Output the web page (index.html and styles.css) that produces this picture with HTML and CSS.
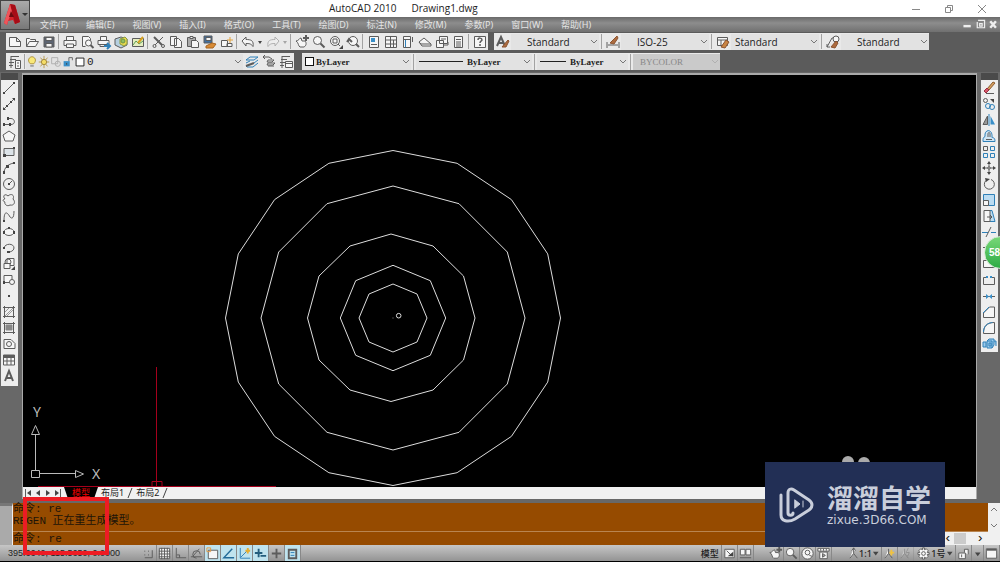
FILE: index.html
```html
<!DOCTYPE html>
<html lang="zh-CN">
<head>
<meta charset="utf-8">
<title>AutoCAD 2010 Drawing1.dwg</title>
<link rel="stylesheet" href="styles.css">
</head>
<body>
<div class="app">
  <header class="titlebar">
    <button class="app-button" aria-label="应用程序菜单">
      <svg width="28" height="28" viewBox="0 0 28 28"><path d="M3 22 9 3l5 1 5 17-5 2-2-4-5 1-1 4z" fill="#d5232b"/><path d="m9 3 5 1 5 17-5 2z" fill="#a60d17"/><path d="M3 22 9 3l2 8-4 9-1 4z" fill="#f0555a"/><path d="m8 16 2-6 3 6z" fill="#6b0b10"/><path d="M21 12h6l-3 3z" fill="#333"/></svg>
    </button>
    <h1 class="title"><span>AutoCAD 2010</span><span>Drawing1.dwg</span></h1>
    <div class="window-buttons">
      <button aria-label="最小化"><svg class="i" viewBox="0 0 16 16"><path d="M4 8.500h8"/></svg></button>
      <button aria-label="还原"><svg class="i" viewBox="0 0 16 16"><path d="M4.500 6.500h5v5h-5zM6.500 6V4.500h5v5H10"/></svg></button>
      <button aria-label="关闭"><svg class="i" viewBox="0 0 16 16"><path d="m4 4 8 8m0-8-8 8"/></svg></button>
    </div>
  </header>

  <nav class="menubar">
    <div class="menus">
      <button>文件(F)</button><button>编辑(E)</button><button>视图(V)</button><button>插入(I)</button><button>格式(O)</button><button>工具(T)</button><button>绘图(D)</button><button>标注(N)</button><button>修改(M)</button><button>参数(P)</button><button>窗口(W)</button><button>帮助(H)</button>
    </div>
    <div class="doc-buttons">
      <button aria-label="最小化文档"><svg class="i" viewBox="0 0 16 16"><path d="M3 10h9" stroke-width="3"/></svg></button>
      <button aria-label="还原文档"><svg class="i" viewBox="0 0 16 16"><path d="M5 3h8v9H4V5M7 7h3v3H7z" stroke-width="1.500"/></svg></button>
      <button aria-label="关闭文档"><svg class="i" viewBox="0 0 16 16"><path d="m4 4 7 8m0-8-7 8" stroke-width="3"/></svg></button>
    </div>
  </nav>

  <div class="toolrow">
    <div class="toolbar">
      <button aria-label="新建"><svg class="i" viewBox="0 0 16 16"><path class="w" d="M2.500 3.500h7l4 4v5h-11zM9.500 3.500v4h4"/></svg></button>
      <button aria-label="打开"><svg class="i" viewBox="0 0 16 16"><path class="w" d="M2.500 12.500v-8h3l1 1h5v2M2.500 12.500l3-5h9l-3 5z"/></svg></button>
      <button aria-label="保存"><svg class="i" viewBox="0 0 16 16"><path class="n" d="M3 3h10v10H3z"/><path class="w" d="M5 3.500h6v3H5zM5 9.500h6V13H5z"/></svg></button>
      <hr>
      <button aria-label="打印"><svg class="i" viewBox="0 0 16 16"><path class="w" d="M4.500 6V2.500h7V6M2 6.500h12v5H2z"/><path d="M4.500 10v3.500h7V10z" class="w"/></svg></button>
      <button aria-label="打印预览"><svg class="i" viewBox="0 0 16 16"><path class="w" d="M3.500 12.500v-10h6l2 2v2M3.500 12.500h3"/><circle class="w" cx="9.500" cy="9" r="3"/><path d="m11.500 11 3 3" stroke-width="2"/></svg></button>
      <button aria-label="发布"><svg class="i" viewBox="0 0 16 16"><path class="w" d="M4.500 6V2.500h6V6M2 6.500h11v4H2zM4 10.500v2h4"/><path class="b" d="M8 12h5m-2-3 3 3-3 3" stroke-width="2"/></svg></button>
      <button aria-label="三维 DWF"><svg class="i" viewBox="0 0 16 16"><path d="m2 5 6-2 6 2v6l-6 3-6-3z" fill="#b5cfe0"/><path d="m7 5 5-2 2 2v5l-3 2-4-2z" fill="#e7d84b" stroke="#8a9a40"/><circle cx="10" cy="7" r="2" fill="#8fbf60" stroke="#6c9448"/></svg></button>
      <button aria-label="图纸集"><svg class="i" viewBox="0 0 16 16"><path d="M2.500 4.500h11v8h-11z" fill="#e5edc0"/><path d="m3 11 3-4 3 3 4-3" stroke="#599d54"/><path d="m8 9 5-6" stroke="#d6a020" stroke-width="2"/></svg></button>
      <hr>
      <button aria-label="剪切"><svg class="i" viewBox="0 0 16 16"><path d="m3 3 8 8M12 3l-8 8"/><path d="m3 3 8 8" stroke-width="2"/><circle cx="3.500" cy="12" r="1.500"/><circle cx="12" cy="12" r="1.500"/></svg></button>
      <button aria-label="复制"><svg class="i" viewBox="0 0 16 16"><path class="w" d="M2.500 2.500h6v9h-6zM6.500 4.500h4l3 3v6h-7z"/></svg></button>
      <button aria-label="粘贴"><svg class="i" viewBox="0 0 16 16"><path d="M2.500 3.500h8v9h-8z" fill="#aaa"/><path class="w" d="M6.500 6.500h5l2 2v5h-7zM5 2.500h3v2H5z"/></svg></button>
      <button aria-label="特性匹配"><svg class="i" viewBox="0 0 16 16"><path d="M2 2h8v7H2z" fill="#3f6fa0"/><path class="w" d="M4 3.500h5v3H4z"/><path d="m4 12 6-3 4 1-3 4H4z" fill="#d88b35" stroke="#a86520"/></svg></button>
      <button aria-label="块编辑器"><svg class="i" viewBox="0 0 16 16"><path class="w" d="M2.500 6.500h6v6h-6zM8 9.500h5v3H8z"/><path d="M11 3v6M8 6h6" stroke="#e2a13b"/></svg></button>
      <hr>
      <button aria-label="放弃"><svg class="i" viewBox="0 0 16 16"><path class="w" d="m2 7 4-4v2.500c5 0 8 1 7 7-2-3-4-3-7-3V12z"/></svg></button>
      <button class="drop" aria-label="放弃列表"><svg class="i" viewBox="0 0 8 16"><path class="f" d="M2 7h4L4 10z"/></svg></button>
      <button class="dim" aria-label="重做"><svg class="i" viewBox="0 0 16 16"><path class="w" d="m14 7-4-4v2.500c-5 0-8 1-7 7 2-3 4-3 7-3V12z"/></svg></button>
      <button class="drop dim" aria-label="重做列表"><svg class="i" viewBox="0 0 8 16"><path class="f" d="M2 7h4L4 10z"/></svg></button>
      <hr>
      <button aria-label="实时平移"><svg class="i" viewBox="0 0 16 16"><path class="w" d="M2 7c3 0 3-3 5-3l1 3h3c2 2 1 5-1 6H6C4 12 5 9 2 7z"/><path d="M12 1v6M9 4h6" stroke-width="2"/></svg></button>
      <button aria-label="实时缩放"><svg class="i" viewBox="0 0 16 16"><circle class="w" cx="6.500" cy="6.500" r="4"/><path d="m9.500 9.500 4 4" stroke-width="2"/></svg></button>
      <button aria-label="窗口缩放"><svg class="i" viewBox="0 0 16 16"><circle class="w" cx="7" cy="7" r="4.500"/><path d="M5 5h4v4H5zM10 10l2 2"/><path class="f" d="M15 11v4h-4z"/></svg></button>
      <button aria-label="缩放上一个"><svg class="i" viewBox="0 0 16 16"><circle class="w" cx="8" cy="7" r="4.500"/><path d="M2 8l2-3 3 3m4 2 3 3" stroke-width="2"/></svg></button>
      <hr>
      <button aria-label="特性"><svg class="i" viewBox="0 0 16 16"><path class="w" d="M3.500 2.500h9v11h-9z"/><path class="bf" d="M5 4h4v4H5z"/><path d="M5 10.500h6"/></svg></button>
      <button aria-label="设计中心"><svg class="i" viewBox="0 0 16 16"><path class="w" d="M2.500 2.500h11v11h-11zM7.500 3v10M3 6h10M3 10h10M10.500 6v7"/></svg></button>
      <button aria-label="工具选项板"><svg class="i" viewBox="0 0 16 16"><path class="w" d="M3.500 2.500h7v11h-7zM4 5.500h6M12.500 3v5"/><path class="b" d="M5.500 6v7"/></svg></button>
      <button aria-label="图纸集管理器"><svg class="i" viewBox="0 0 16 16"><path class="w" d="m2 8 5-4 7 6H4zM2 8l3 4h9v-2"/></svg></button>
      <button aria-label="标记集管理器"><svg class="i" viewBox="0 0 16 16"><path class="w" d="M5.500 2.500h8v7h-8zM2.500 6.500h7v7h-7zM10 11h4v-3M7 5h5"/></svg></button>
      <button aria-label="快速计算器"><svg class="i" viewBox="0 0 16 16"><path class="w" d="M3.500 2.500h8v11h-8zM5 5.500h5M5 8h5M5 10h5M5 12h5"/></svg></button>
      <hr>
      <button aria-label="帮助"><svg class="i" viewBox="0 0 16 16"><path class="w" d="M2.500 2.500h11v11h-11z"/><path d="M6 6c0-3 4-2 4 0 0 1-2 1-2 3m0 1v2" stroke-width="1.500"/></svg></button>
    </div>
    <div class="toolbar styles">
      <button aria-label="文字样式"><svg class="i" viewBox="0 0 16 16"><path d="m2 12 4-9 4 9M4 9h4" stroke-width="2"/><path d="m7 13 6-7 1 1-3 6z" fill="#ad6c3f" stroke="#8b5330"/></svg></button>
      <label class="combo ind"><select aria-label="文字样式"><option>Standard</option></select><svg class="chev" viewBox="0 0 8 8"><path d="m1 2 3 3 3-3"/></svg></label>
      <hr>
      <button aria-label="标注样式"><svg class="i" viewBox="0 0 16 16"><path d="M2 8v6m12-6v6M3 11h10"/><path d="m5 9 7-7 1 2-4 6z" fill="#ad6c3f" stroke="#8b5330"/></svg></button>
      <label class="combo ind"><select aria-label="标注样式"><option>ISO-25</option></select><svg class="chev" viewBox="0 0 8 8"><path d="m1 2 3 3 3-3"/></svg></label>
      <hr>
      <button aria-label="表格样式"><svg class="i" viewBox="0 0 16 16"><path class="w" d="M2.500 3.500h10v8h-10zM2.500 6h10M6 6v5"/><path d="m6 13 5-7 3 2-4 6z" fill="#c98442" stroke="#8b5330"/></svg></button>
      <label class="combo"><select aria-label="表格样式"><option>Standard</option></select><svg class="chev" viewBox="0 0 8 8"><path d="m1 2 3 3 3-3"/></svg></label>
      <hr>
      <button aria-label="多重引线样式"><svg class="i" viewBox="0 0 16 16"><path class="w" d="m2 13 5-9h2M2 10v3h3"/><circle class="w" cx="11" cy="5" r="3"/><path d="m6 13 5-6 2 2-3 5z" fill="#ad6c3f" stroke="#8b5330"/></svg></button>
      <label class="combo ind"><select aria-label="多重引线样式"><option>Standard</option></select><svg class="chev" viewBox="0 0 8 8"><path d="m1 2 3 3 3-3"/></svg></label>
    </div>
  </div>

  <div class="toolrow second">
    <div class="toolbar layers">
      <button aria-label="图层特性"><svg class="i" viewBox="0 0 16 16"><path class="w" d="M4 2.500h8M3 5.500h6M2 8.500h5M2 11.500h4M4 2v12M8.500 6.500h5v8h-5zM10 9h2m-2 3h2"/></svg></button>
      <hr>
      <div class="layer-box">
        <svg class="i" viewBox="0 0 12 16"><path d="M4 10c-4-4-1-8 2-8s6 4 2 8z" fill="#f9e878" stroke="#a88c35"/><path d="M4 12.500h4"/></svg>
        <svg class="i" viewBox="0 0 12 16"><path d="M6 1v14M0 8h12M2 3l8 10m0-10L2 13" stroke="#b39443"/><circle cx="6" cy="8" r="3" fill="#f5dd67" stroke="#9b8138"/></svg>
        <svg class="i faint" viewBox="0 0 12 16"><path d="M1 3h7v7H1z"/><circle cx="8" cy="10" r="3"/></svg>
        <svg class="i" viewBox="0 0 12 16"><path class="bf" d="M1 7h7v6H1z"/><path d="M7 7V3h4v3"/><path class="f" d="M4 9h1v2H4z"/></svg>
        <svg class="i" viewBox="0 0 12 16"><path d="M1.500 3.500h9v9h-9z" fill="#fff" stroke="#111"/></svg>
        <label class="combo"><select aria-label="图层"><option>0</option></select><svg class="chev" viewBox="0 0 8 8"><path d="m1 2 3 3 3-3"/></svg></label>
      </div>
      <button aria-label="置为当前图层"><svg class="i" viewBox="0 0 16 16"><path class="b" d="m2 6 4-3h8l-4 3zM2 9l4-2m4 2 4-3M2 12l1 1h6l5-4"/><path d="m2 12 8-3" stroke-width="2"/></svg></button>
      <button aria-label="上一个图层"><svg class="i" viewBox="0 0 16 16"><path d="M2 3h6l3 2M7 6h6l-2 2H6zM7 9h7l-2 2H6zM7 12h6M2 3l2-2M2 3l2 2"/></svg></button>
      <button aria-label="图层状态"><svg class="i" viewBox="0 0 16 16"><path class="w" d="M4 2.500h8M3 5.500h6M2 8.500h5M2 11.500h4M4 2v12M7.500 7.500h7v6h-7zM7.500 9.500h7"/></svg></button>
    </div>
    <div class="toolbar props">
      <label class="combo color"><i class="swatch"></i><select aria-label="颜色"><option>ByLayer</option></select><svg class="chev" viewBox="0 0 8 8"><path d="m1 2 3 3 3-3"/></svg></label>
      <hr>
      <label class="combo ltype"><i class="rule long"></i><select aria-label="线型"><option>ByLayer</option></select><svg class="chev" viewBox="0 0 8 8"><path d="m1 2 3 3 3-3"/></svg></label>
      <hr>
      <label class="combo lweight"><i class="rule"></i><select aria-label="线宽"><option>ByLayer</option></select><svg class="chev" viewBox="0 0 8 8"><path d="m1 2 3 3 3-3"/></svg></label>
      <hr>
      <label class="combo plot"><select aria-label="打印样式" disabled><option>BYCOLOR</option></select><svg class="chev" viewBox="0 0 8 8"><path d="m1 2 3 3 3-3"/></svg></label>
    </div>
  </div>

  <main class="workspace">
    <aside class="palette draw">
      <button aria-label="直线"><svg class="i" viewBox="0 0 16 16"><path d="M3 13 13 3"/><path class="f" d="M2 12h2v2H2zM12 2h2v2h-2z"/></svg></button>
      <button aria-label="构造线"><svg class="i" viewBox="0 0 16 16"><path d="M3 13 13 3"/><path class="f" d="M2 11v3h3zM14 5V2h-3zM5 9h2v2H5zM9 5h2v2H9z"/></svg></button>
      <button aria-label="多段线"><svg class="i" viewBox="0 0 16 16"><path d="M3 12.500h7c5 0 4-6 0-6H7"/><path class="f" d="M2 11h2v3H2zM8 11h2v3H8zM6 5h2v3H6z"/></svg></button>
      <button aria-label="正多边形"><svg class="i" viewBox="0 0 16 16"><path class="w" d="m8 3 6 4-2 6H4L2 7z"/></svg></button>
      <button aria-label="矩形"><svg class="i" viewBox="0 0 16 16"><path d="M3 4.500h10v7H3z" fill="#dce3e8"/><path class="f" d="M2 10h3v3H2zM12 3h2v2h-2z"/></svg></button>
      <button aria-label="圆弧"><svg class="i" viewBox="0 0 16 16"><path d="M3 13c0-5 4-9 10-10"/><path class="f" d="M2 11h2v3H2zM5 5h3v3H5zM12 2h2v2h-2z"/></svg></button>
      <button aria-label="圆"><svg class="i" viewBox="0 0 16 16"><circle cx="8" cy="8" r="5.500"/><path d="m8 8 3-3"/><path class="f" d="M7 7h2v2H7z"/></svg></button>
      <button aria-label="修订云线"><svg class="i" viewBox="0 0 16 16"><path d="M4 7C1 4 4 1 7 4c3-3 7-1 5 3 3 3 1 7-3 6-3 2-6-1-5-3-3-1-2-3 0-3z"/></svg></button>
      <button aria-label="样条曲线"><svg class="i" viewBox="0 0 16 16"><path d="M3 13c0-14 5-6 6-4 3 3 4-1 4-6"/><path class="f" d="M2 12h2v2H2z"/></svg></button>
      <button aria-label="椭圆"><svg class="i" viewBox="0 0 16 16"><ellipse class="w" cx="8" cy="8" rx="5" ry="3.500"/><path class="f" d="M2 7h2v3H2zM12 7h2v3h-2zM7 3h2v2H7z"/></svg></button>
      <button aria-label="椭圆弧"><svg class="i" viewBox="0 0 16 16"><path d="M3 8c1-5 10-5 10 0 0 3-4 4-5 4"/><path class="f" d="M2 7h2v2H2zM6 11h3v2H6z"/></svg></button>
      <button aria-label="插入块"><svg class="i" viewBox="0 0 16 16"><path class="w" d="M6 2.500h7v7H6z"/><circle cx="7" cy="6" r="3"/><path class="w" d="M3 7.500h6v5H3z"/><path class="f" d="M14 10v4h-4z"/></svg></button>
      <button aria-label="创建块"><svg class="i" viewBox="0 0 16 16"><path class="w" d="M3 3.500h8v7H3z"/><circle class="w" cx="11" cy="10" r="2.500"/><path class="f" d="M2 9h2v3H2z"/></svg></button>
      <button aria-label="点"><svg class="i" viewBox="0 0 16 16"><path class="f" d="M7 7h2v2H7z"/></svg></button>
      <button aria-label="图案填充"><svg class="i" viewBox="0 0 16 16"><path d="M2 3.500h12M2 12.500h12M3.500 2v12M12.500 2v12"/><path d="m4 8 4-4m-4 8 8-8m-6 8 6-6" stroke="#999"/></svg></button>
      <button aria-label="渐变色"><svg class="i" viewBox="0 0 16 16"><path d="M2 3.500h12M2 12.500h12M3.500 2v12M12.500 2v12"/><path d="M5 5h6v5H5z" fill="#888" stroke="#888"/></svg></button>
      <button aria-label="面域"><svg class="i" viewBox="0 0 16 16"><path class="w" d="M3 3.500h7l4 4v5H3z"/><circle class="w" cx="8" cy="8" r="2.500"/></svg></button>
      <button aria-label="表格"><svg class="i" viewBox="0 0 16 16"><path class="w" d="M2.500 3h11v10h-11zM2.500 5.500h11M2.500 9h11M6 6v7M10 6v7"/><path d="M3 4h10" stroke-width="2"/></svg></button>
      <button aria-label="多行文字"><svg class="i" viewBox="0 0 16 16"><path d="m4 13 4-10 4 10M5 10h6" stroke-width="2"/></svg></button>
    </aside>

    <section class="document">
      <div class="canvas">
        <svg class="drawing" role="img" aria-label="同心圆图形">
          <g transform="translate(-23 -75)" fill="none" stroke="#ddd" stroke-width="1">
            <g transform="translate(393 318)">
              <path d="M167.500 0 154.700 64.100 118.400 118.400 64.100 154.700 0 167.500-64.100 154.700-118.400 118.400-154.700 64.100-167.500 0-154.700-64.100-118.400-118.400-64.100-154.700 0-167.500 64.100-154.700 118.400-118.400 154.700-64.100z"/>
              <path d="M132 0 114.300 66 66 114.300 0 132-66 114.300-114.300 66-132 0-114.300-66-66-114.300 0-132 66-114.300 114.300-66z"/>
              <path d="M82 0 70.500 42 40 72-2 83.500-43 72-74 42-85.500 0-74-42-43-72-2-84 40-72 70.500-42z"/>
              <path d="M52.700 0 37.300 37.300 0 52.700-37.300 37.300-52.700 0-37.300-37.300 0-52.700 37.300-37.300z"/>
              <path d="M34 0 24 24 0 34-24 24-34 0-24-24 0-34 24-24z"/>
              <circle cx="5.700" cy="-2.300" r="2.300"/><path d="M-.5 0h1" stroke="#888"/>
            </g>
            <g stroke="#bbb"><path d="M31.500 470.500h8v7h-8zM35.500 470v-36M31.500 434.500h8l-4-9zM40 473.500h35M75.500 470.500v7l8-3.500z"/></g>
            <g stroke="#a5001c"><path d="M156.500 367v119M38 486.500h238M152 481.500h10v6h-10z"/></g>
            <g fill="#bbb" stroke="none" class="axis"><text x="33" y="417">Y</text><text x="92" y="479">X</text></g>
            <g fill="#aaa" stroke="none"><circle cx="848" cy="462" r="6"/><circle cx="864" cy="463" r="6"/></g>
          </g>
        </svg>
      </div>
      <div class="tabs">
        <button class="nav" aria-label="第一个"><svg class="i" viewBox="0 0 10 12"><path d="M2.500 2v8"/><path class="f" d="M8 3v6L4 6z"/></svg></button>
        <button class="nav" aria-label="上一个"><svg class="i" viewBox="0 0 10 12"><path class="f" d="M7 3v6L3 6z"/></svg></button>
        <button class="nav" aria-label="下一个"><svg class="i" viewBox="0 0 10 12"><path class="f" d="M3 3v6l4-3z"/></svg></button>
        <button class="nav" aria-label="最后一个"><svg class="i" viewBox="0 0 10 12"><path d="M7.500 2v8"/><path class="f" d="M2 3v6l4-3z"/></svg></button>
        <button class="tab active">模型</button>
        <button class="tab">布局1</button><svg class="slash" viewBox="0 0 6 12"><path d="M1 11 5 1"/></svg>
        <button class="tab">布局2</button><svg class="slash" viewBox="0 0 6 12"><path d="M1 11 5 1"/></svg>
      </div>
    </section>

    <aside class="palette modify">
      <button aria-label="删除"><svg class="i" viewBox="0 0 16 16"><path d="m6 9 6-7 2 1-6 7z" fill="#d7a15f" stroke="#8a5a30"/><path d="m3 11 3-3 2 2-3 3z" fill="#d6576a" stroke="#9b3040"/><path d="M5 13.500h8"/></svg></button>
      <button aria-label="复制对象"><svg class="i" viewBox="0 0 16 16"><circle cx="4.500" cy="4.500" r="2"/><circle class="b" cx="7" cy="10" r="2.500"/><circle class="b" cx="11" cy="11" r="2.500"/><path class="f" d="M9 3h4v4z"/></svg></button>
      <button aria-label="镜像"><svg class="i" viewBox="0 0 16 16"><path d="M6.500 4v8.500H2z" fill="#999"/><path class="bf" d="M9.500 4v8.500H14z"/><path class="b" d="M8 2v12"/></svg></button>
      <button aria-label="偏移"><svg class="i" viewBox="0 0 16 16"><path class="b" d="M2 13.500h12c0-4-2-4-3-4 1-9-8-9-7-1-2 1-2 2-2 5z" fill="#cfe4f3"/><path d="M5 11.500h6M7 9V6c0-2 2-2 2 0v3"/></svg></button>
      <button aria-label="阵列"><svg class="i" viewBox="0 0 16 16"><path class="b" d="M9.500 2.500h4v4h-4zM2.500 9.500h4v4h-4zM9.500 9.500h4v4h-4z"/><path d="M2.500 2.500h4v4h-4z"/></svg></button>
      <button aria-label="移动"><svg class="i" viewBox="0 0 16 16"><path d="M8 3v10M3 8h10"/><path class="f" d="m8 1 2 3H6zM8 15l2-3H6zM1 8l3-2v4zM15 8l-3-2v4z"/><path class="w" d="M7 7h2v2H7z"/></svg></button>
      <button aria-label="旋转"><svg class="i" viewBox="0 0 16 16"><path d="M10 3.500a5 5 0 1 1-5 1"/><path class="f" d="m4 2 5 1-4 3z"/></svg></button>
      <button aria-label="缩放"><svg class="i" viewBox="0 0 16 16"><path class="b" d="M2.500 2.500h11v11h-11z" fill="#bcdcf2"/><path class="w" d="M2.500 8.500h5v5h-5z"/></svg></button>
      <button aria-label="拉伸"><svg class="i" viewBox="0 0 16 16"><path class="b" d="M9 2.500h2l3 11H7" fill="#bcdcf2"/><path class="w" d="M3 2.500h6v11H3z"/><path d="M6 9h5M9 7l2 2-2 2"/></svg></button>
      <button aria-label="修剪"><svg class="i" viewBox="0 0 16 16"><path class="b" d="M1 8.500h6m3 0h5"/><path d="m5 13 5-10"/></svg></button>
      <button aria-label="延伸"><svg class="i" viewBox="0 0 16 16"><path d="M2 7.500h7M12.500 3v10"/></svg></button>
      <button aria-label="打断于点"><svg class="i" viewBox="0 0 16 16"><path class="w" d="M2.500 4.500h11v7h-11z"/></svg></button>
      <button aria-label="打断"><svg class="i" viewBox="0 0 16 16"><path d="M5 5.500H2.500v7h11v-7H11"/><path class="bf" d="M5 4h2v2H5zM9 4h2v2H9z"/></svg></button>
      <button aria-label="合并"><svg class="i" viewBox="0 0 16 16"><path d="M2 8.500h12"/><path class="bf" d="m5 6 3 2.500L5 11zM11 6 8 8.500 11 11z"/></svg></button>
      <button aria-label="倒角"><svg class="i" viewBox="0 0 16 16"><path class="w" d="M2.500 13.500V9l6-6h5v10.500z"/><path class="b" d="m2 9 6-6"/></svg></button>
      <button aria-label="圆角"><svg class="i" viewBox="0 0 16 16"><path class="w" d="M2.500 13.500c0-7 3-11 11-11v11z"/><path class="b" d="M2.500 12c0-6 4-9 9-9.500"/></svg></button>
      <button aria-label="分解"><svg class="i" viewBox="0 0 16 16"><path class="b" d="M2 6h3v5H2zM6 5h5v7H6zM6 5l2-2h5v6l-2 3M13 5h2v5" fill="#9bcbed"/><path class="b" d="M8 7h2v3H8z"/></svg></button>
    </aside>
  </main>

  <section class="command">
    <div class="grip"></div>
    <div class="console">
      <div class="history"><p>命令: re</p><p>REGEN 正在重生成模型。</p></div>
      <div class="prompt">
        <label for="cmd">命令:</label><input id="cmd" value="re">
        <div class="hscroll"><span>‹</span><i></i><span>›</span></div>
      </div>
    </div>
    <div class="vscroll"><svg class="chev" viewBox="0 0 8 8"><path d="m1 5 3-3 3 3"/></svg><svg class="chev" viewBox="0 0 8 8"><path d="m1 2 3 3 3-3"/></svg></div>
  </section>

  <footer class="statusbar">
    <output class="coords">395.6640, 115.5650, 0.0000</output>
    <div class="group">
      <button aria-label="捕捉"><svg class="i" viewBox="0 0 16 16"><path d="M4 12.500h8v-8M4 5v1m4-1v1M4 9v1m4-1v1"/></svg></button>
      <button aria-label="栅格"><svg class="i" viewBox="0 0 16 16"><path class="w" d="M2.500 2.500h11v11h-11zM5 2v12M8 2v12M11 2v12M2 5.500h12M2 8.500h12M2 11.500h12"/></svg></button>
      <button aria-label="正交"><svg class="i" viewBox="0 0 16 16"><path d="M3.500 2v10.500H14M4 9.500h3v3"/></svg></button>
      <button aria-label="极轴"><svg class="i" viewBox="0 0 16 16"><path d="M2 11.500h12M4 11l7-8M12 9a4 4 0 1 0-4 4"/></svg></button>
      <button class="on" aria-label="对象捕捉"><svg class="i" viewBox="0 0 16 16"><path class="w" d="M3.500 4.500h10v9h-10z"/><path d="M2 2h4v4H2z" stroke="#e29a45"/></svg></button>
      <button class="on" aria-label="对象追踪"><svg class="i" viewBox="0 0 16 16"><path d="M12 3 3 12.500h11" stroke="#236b99" stroke-width="1.500"/></svg></button>
      <button class="on" aria-label="动态 UCS"><svg class="i" viewBox="0 0 16 16"><path class="b" d="M3.500 2v11H14M4 12l8-8"/><path d="M9 5h5M11.500 2v6" stroke="#e7ae30" stroke-width="2"/></svg></button>
      <button class="on" aria-label="动态输入"><svg class="i" viewBox="0 0 16 16"><path d="M2 7.500h8M6 3v9M8 10.500h6" stroke-width="2" stroke="#235d7c"/></svg></button>
      <button aria-label="线宽"><svg class="i" viewBox="0 0 16 16"><path d="M8 3v10M3 8h10" stroke-width="2"/></svg></button>
      <button class="on" aria-label="快捷特性"><svg class="i" viewBox="0 0 16 16"><path d="M4 4h8v9H4z" stroke-width="2"/><path class="b" d="M6 7h4M6 10h4"/></svg></button>
    </div>
    <div class="group right">
      <button class="txt">模型</button>
      <button aria-label="布局"><svg class="i" viewBox="0 0 16 16"><path class="w" d="M3 3.500h10v9H3zM5 5l6 6"/><path class="f" d="M6 11h6V6z"/></svg></button>
      <button aria-label="快速查看"><svg class="i" viewBox="0 0 16 16"><path class="w" d="M2.500 3.500h5v6h-5zM8.500 3.500h5v6h-5zM2 12.500h12"/></svg></button>
      <i class="space"></i>
      <button aria-label="平移"><svg class="i" viewBox="0 0 16 16"><path class="w" d="M2 7c3 0 3-3 5-3l1 3h3c2 2 1 5-1 6H6C4 12 5 9 2 7z"/><path d="M12 1v6M9 4h6" stroke-width="2"/></svg></button>
      <button aria-label="缩放视图"><svg class="i" viewBox="0 0 16 16"><circle class="w" cx="6.500" cy="6.500" r="4"/><path d="m9.500 9.500 4 4" stroke-width="2"/></svg></button>
      <button aria-label="控制盘"><svg class="i" viewBox="0 0 16 16"><circle class="w" cx="8" cy="8" r="6"/><circle class="w" cx="8" cy="7" r="2.500"/><path d="m10 10 3 1"/></svg></button>
      <button aria-label="动画"><svg class="i" viewBox="0 0 16 16"><path class="w" d="M2 2.500h12v3H2zM4 6.500h8v7H4zM7 8v4l3-2zM5 3v2m3-2v2m3-2v2"/></svg></button>
      <i class="space"></i>
      <button class="txt" aria-label="注释比例"><svg class="i" viewBox="0 0 12 16"><path class="w" d="M6 2v6l-4 5m4-5 4 5M4 5l2-3 2 3"/></svg>1:1<svg class="i" viewBox="0 0 8 16"><path class="f" d="M1 6h6L4 10z"/></svg></button>
      <button aria-label="注释可见性"><svg class="i" viewBox="0 0 16 16"><path class="w" d="M7 3v5l-4 5m4-5 4 5"/><path d="M8 7h5m-3-3v6" stroke="#f2c33e" stroke-width="2"/></svg></button>
      <button class="dim" aria-label="自动缩放"><svg class="i" viewBox="0 0 16 16"><path class="w" d="M7 3v5l-4 5m4-5 4 5M11 2l-2 5h3l-2 4"/></svg></button>
      <button class="txt gear" aria-label="工作空间"><svg class="i" viewBox="0 0 16 16"><path class="w" d="M7 2h2v2l2-1 2 2-1 2h2v2h-2l1 2-2 2-2-1v2H7v-2l-2 1-2-2 1-2H2V7h2L3 5l2-2 2 1z"/><circle cx="8" cy="8" r="2"/></svg>1号<svg class="i" viewBox="0 0 8 16"><path class="f" d="M1 6h6L4 10z"/></svg></button>
      <button aria-label="锁定"><svg class="i" viewBox="0 0 16 16"><path class="w" d="M3 7.500h7v6H3zM9 7V3.500h4V9M6 9v3"/></svg></button>
      <button class="drop" aria-label="状态栏菜单"><svg class="i" viewBox="0 0 8 16"><path class="f" d="M1 7h6l-3 4z"/></svg></button>
      <button aria-label="全屏显示"><svg class="i" viewBox="0 0 16 16"><path class="w" d="M2.500 3h11v10h-11z"/><path d="M3 4h10" stroke-width="2"/></svg></button>
    </div>
  </footer>

  <div class="highlight"></div>
  <div class="ball">58</div>
  <div class="watermark">
    <svg width="36" height="38" viewBox="0 0 36 38" fill="none" stroke="#c9cedb" stroke-width="3" stroke-linecap="round" stroke-linejoin="round"><path d="M14 27c0 3-5 3-5 0V7c0-4 3-5 6-3l15 10c4 3 4 7 0 10l-14 9c-7 4-14 2-14-4V9"/><path d="m16 14 5 4-5 4z" fill="#c9cedb" stroke-width="1"/><path d="M24 15v6" stroke-width="1"/></svg>
    <div class="brand"><strong>溜溜自学</strong><span>zixue.3D66.COM</span></div>
  </div>
</div>
</body>
</html>
```
FILE: styles.css
```css
* { box-sizing: border-box; }
body { margin: 0; background: #666; font-family: "Noto Sans", "Noto Sans CJK SC", sans-serif; font-size: 9px; color: #222; }
button { appearance: none; border: 0; margin: 0; padding: 0; background: none; font: inherit; color: inherit; display: flex; align-items: center; justify-content: center; }
p, h1 { margin: 0; font-weight: normal; }

.app { position: relative; display: flex; flex-direction: column; height: 100vh; overflow: hidden; border-bottom: 1px solid #000; }

.i { display: block; height: 16px; fill: none; stroke: #5c5c5c; stroke-width: 1; flex: none; }
.i .w { fill: #f6f6f6; }
.i .f { fill: #444; stroke: none; }
.i .n { fill: #5c6472; }
.i .b { stroke: #2f80b8; }
.i .bf { fill: #3a8fc8; stroke: none; }
.chev { width: 8px; height: 8px; fill: none; stroke: #777; }
.dim, .faint { opacity: .4; }

.titlebar { display: flex; align-items: center; height: 17px; background: #fff; }
.app-button { position: absolute; left: 0; top: 0; width: 30px; height: 30px; z-index: 2; background: linear-gradient(#aaa, #787878); border: 1px solid #444; }
.title { flex: 1; display: flex; gap: 15px; padding-left: 329px; font: 10px/17px "Open Sans", sans-serif; }
.window-buttons { display: flex; gap: 17px; padding-right: 10px; }
.window-buttons .i { stroke: #888; }

.menubar { display: flex; justify-content: space-between; height: 15px; padding-left: 40px; background: linear-gradient(#6a6a6a, #8d8d8d 40%, #707070); color: #e4e4e4; }
.menus { display: flex; gap: 18px; font-size: 9px; line-height: 15px; }
.doc-buttons { display: flex; align-items: center; }
.doc-buttons .i { width: 13px; height: 13px; stroke: #eee; }

.toolrow { display: flex; gap: 6px; padding: 1px 0 0 6px; background: #5b5b5b; height: 20px; align-items: flex-start; }
.toolbar { display: flex; align-items: center; height: 17px; background: #e9e9e9; }
.toolbar button { width: 17px; height: 17px; }
.toolbar .drop { width: 8px; }
.toolbar hr { width: 1px; height: 15px; margin: 0 2px 0 1px; border: 0; background: #a2a2a2; }
.styles hr { margin: 0 2px; }
.combo { position: relative; display: flex; align-items: center; width: 88px; height: 16px; background: #e2e2e2; }
.combo select { appearance: none; flex: 1; min-width: 0; height: 16px; border: 0; margin: 0; padding: 0 12px 0 4px; background: none; font: 10px/16px "Open Sans", sans-serif; color: #222; }
.combo.ind select { padding-left: 16px; }
.combo .chev { position: absolute; right: 1px; top: 4px; pointer-events: none; }

.second { padding-top: 1px; gap: 8px; }
.layers hr { margin: 0 1px; }
.layer-box { display: flex; align-items: center; height: 16px; background: #e2e2e2; }
.layer-box > .i { width: 12px; height: 14px; }
.layer-box .combo { width: 157px; background: none; }
.layer-box .combo select { padding-left: 1px; font-family: "Liberation Mono", monospace; font-size: 11px; }
.props hr { margin: 0 2px; height: 16px; }
.props .combo select { font: bold 9px/16px "Liberation Serif", serif; }
.swatch { width: 9px; height: 9px; border: 1px solid #111; background: #fff; margin-left: 3px; }
.rule { width: 26px; height: 1px; background: #222; margin-left: 3px; }
.rule.long { width: 44px; }
.props .color { width: 109px; }
.props .color select { padding-left: 2px; }
.props .ltype { width: 116px; }
.props .lweight { width: 91px; }
.props .plot { width: 87px; background: #cacaca; }
.props .plot select { padding-left: 7px; color: #888; opacity: 1; font-weight: normal; }
.plot .chev { opacity: .3; }

.workspace { flex: 1; min-height: 0; display: flex; align-items: flex-start; padding: 1px 2px 4px 1px; background: #686868; }
.palette { flex: none; width: 17px; border-top: 7px solid #4a4a4a; background: #eee; }
.palette button { width: 16px; height: 16px; }
.draw { padding-bottom: 2px; }
.modify { margin-left: 4px; }
.document { flex: 1; align-self: stretch; min-width: 0; display: flex; flex-direction: column; margin-left: 4px; border: 1px solid #aaa; border-width: 2px 1px 0; }
.canvas { flex: 1; min-height: 0; background: #000; }
.drawing { display: block; width: 100%; height: 100%; }
.axis { font: 14px "Noto Sans", sans-serif; }
.tabs { display: flex; align-items: center; height: 12px; background: #f1f1f1; font-size: 9px; line-height: 12px; }
.nav { width: 10px; height: 12px; }
.nav .i { width: 10px; height: 12px; }
.tab { height: 12px; padding: 0 3px; }
.tab.active { width: 34px; margin-left: 1px; background: #000; color: #e00; clip-path: polygon(0 0, 100% 0, 88% 100%, 12% 100%); }
.slash { width: 6px; height: 12px; fill: none; stroke: #444; }

.command { display: flex; height: 42px; background: #964b00; }
.grip { width: 13px; background: #aaa; border-right: 1px solid #eee; border-top: 3px solid #777; }
.console { flex: 1; display: flex; flex-direction: column; font: 11px/12px "Liberation Mono", "Noto Sans CJK SC", monospace; color: #201408; }
.history { flex: 1; border-bottom: 1px solid #b98550; }
.prompt { display: flex; align-items: center; height: 13px; }
.prompt input { flex: 1; min-width: 0; height: 13px; border: 0; margin: 0; padding: 0 0 0 7px; background: none; font: inherit; color: inherit; }
.hscroll { display: flex; align-items: center; justify-content: space-between; width: 44px; height: 13px; padding: 0 4px 0 0; background: #f0f0f0; font-size: 13px; }
.hscroll i { width: 12px; height: 11px; margin-right: 8px; background: #cbcbcb; }
.vscroll { display: flex; flex-direction: column; justify-content: space-between; align-items: center; width: 12px; height: 42px; padding: 3px 0 15px; background: #f0f0f0; }

.statusbar { display: flex; justify-content: space-between; height: 16px; background: linear-gradient(#c6c6c6, #939393); }
.coords { width: 141px; padding-left: 8px; font: 9px/16px "Liberation Sans", sans-serif; }
.group { display: flex; }
.group button { width: 16px; height: 16px; border-right: 1px solid #888; }
.group .i { height: 15px; }
.group .on { background: #bfe3ee; }
.group .txt { width: auto; padding: 0 2px; font-weight: 500; }
.group .drop { width: 12px; }
.group .space { width: 14px; }
.right { margin-left: auto; }

.highlight { position: absolute; left: 23px; bottom: 6px; width: 86px; height: 58px; border: 4px solid #ed1c24; }
.ball { position: absolute; right: -17px; top: 236px; width: 33px; height: 33px; border-radius: 50%; border: 1px solid #d5e8d5; padding-left: 4px; background: linear-gradient(#78d878, #2eab45); color: #fff; font: bold 10px/31px "Liberation Sans", sans-serif; }
.watermark { position: absolute; right: 55px; bottom: 14px; width: 180px; height: 85px; display: flex; align-items: center; gap: 12px; padding-left: 14px; background: #222f55; color: #c9cedb; }
.brand { display: flex; flex-direction: column; }
.brand strong { font: bold 26px/30px "Noto Sans CJK SC", sans-serif; }
.brand span { font: 12px/16px "DejaVu Sans", sans-serif; }
```
